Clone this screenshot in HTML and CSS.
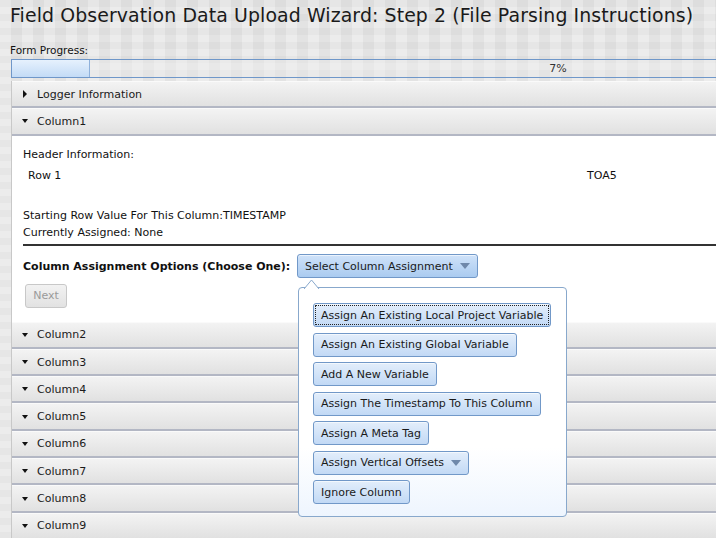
FILE: index.html
```html
<!DOCTYPE html>
<html>
<head>
<meta charset="utf-8">
<link rel="stylesheet" href="styles.css">
</head>
<body>
<div class="page">
  <h1 class="title">Field Observation Data Upload Wizard: Step 2 (File Parsing Instructions)</h1>
  <div class="progress-label">Form Progress:</div>
  <div class="progress">
    <div class="progress-fill" style="width: 78px"></div>
    <div class="progress-text">7%</div>
  </div>
  <div class="accordion">
    <div class="acc-header"><span class="tri tri-right"></span>Logger Information</div>
    <div class="acc-header"><span class="tri tri-down"></span>Column1</div>
    <div class="acc-content">
      <div class="line">Header Information:</div>
      <div class="row-table">
        <span class="cell-a">Row 1</span>
        <span class="cell-b">TOA5</span>
      </div>
      <div class="line start">Starting Row Value For This Column:TIMESTAMP</div>
      <div class="line">Currently Assigned: None</div>
      <div class="rule"></div>
      <div class="assign-row">
        <span class="assign-label">Column Assignment Options (Choose One):</span>
        <div class="select-wrap">
          <button class="btn btn-select">Select Column Assignment <span class="caret"></span></button>
          <div class="popup">
            <svg class="popup-arrow" width="18" height="10" viewBox="0 0 18 10"><path d="M0 10 L7.5 1 L15 10" fill="#fff" stroke="#88a8cc" stroke-width="1"/></svg>
            <button class="btn btn-opt focused">Assign An Existing Local Project Variable</button>
            <button class="btn btn-opt">Assign An Existing Global Variable</button>
            <button class="btn btn-opt">Add A New Variable</button>
            <button class="btn btn-opt">Assign The Timestamp To This Column</button>
            <button class="btn btn-opt">Assign A Meta Tag</button>
            <button class="btn btn-opt">Assign Vertical Offsets <span class="caret"></span></button>
            <button class="btn btn-opt">Ignore Column</button>
          </div>
        </div>
      </div>
      <button class="btn-next" disabled>Next</button>
    </div>
    <div class="acc-header"><span class="tri tri-down"></span>Column2</div>
    <div class="acc-header"><span class="tri tri-down"></span>Column3</div>
    <div class="acc-header"><span class="tri tri-down"></span>Column4</div>
    <div class="acc-header"><span class="tri tri-down"></span>Column5</div>
    <div class="acc-header"><span class="tri tri-down"></span>Column6</div>
    <div class="acc-header"><span class="tri tri-down"></span>Column7</div>
    <div class="acc-header"><span class="tri tri-down"></span>Column8</div>
    <div class="acc-header"><span class="tri tri-down"></span>Column9</div>
  </div>
</div>
</body>
</html>
```
FILE: styles.css
```css
html, body {
  margin: 0;
  padding: 0;
  overflow: hidden;
}
body {
  width: 716px;
  height: 538px;
  background-color: #e5e5e5;
  background-image:
    linear-gradient(90deg, rgba(255,255,255,0.18) 50%, rgba(0,0,0,0.02) 50%),
    linear-gradient(0deg, rgba(255,255,255,0.12) 50%, rgba(0,0,0,0.02) 50%);
  background-size: 22px 22px, 14px 14px;
  font-family: "DejaVu Sans", Verdana, sans-serif;
  font-size: 11px;
  color: #111;
}
.page {
  padding-left: 10px;
  width: 1100px;
}
.title {
  margin: 0;
  padding-top: 3px;
  height: 38px;
  font-size: 18.9px;
  font-weight: normal;
  line-height: 24px;
  color: #1a1a1a;
  letter-spacing: 0.1px;
}
.progress-label {
  height: 18px;
  line-height: 19px;
  font-size: 10.5px;
}
.progress {
  position: relative;
  margin-left: 1px;
  width: 1092px;
  height: 17px;
  border: 1px solid #6f97c9;
  background: rgba(240,240,240,0.4);
}
.progress-fill {
  height: 17px;
  background: linear-gradient(#e6f1fd, #c3dbf6);
  border-right: 1px solid #8fb1db;
  box-sizing: border-box;
}
.progress-text {
  position: absolute;
  left: 0;
  right: 0;
  top: 0;
  text-align: center;
  line-height: 17px;
  font-size: 11px;
  color: #333;
}
.accordion {
  margin-left: 1px;
  margin-top: 3px;
  border-left: 1px solid #c8c8c8;
}
.acc-header {
  display: flex;
  align-items: center;
  height: 24.3px;
  border-top: 1px solid #fafafa;
  border-bottom: 2px solid #b3b7c4;
  background: linear-gradient(#f3f3f3, #e1e1e1);
  padding-left: 10px;
  font-size: 11px;
  color: #1a1a1a;
}
.tri {
  display: inline-block;
  width: 0;
  height: 0;
  margin-right: 9px;
}
.tri-right {
  border-top: 4px solid transparent;
  border-bottom: 4px solid transparent;
  border-left: 4px solid #111;
  margin-left: 1px;
  margin-right: 10px;
}
.tri-down {
  border-left: 3.5px solid transparent;
  border-right: 3.5px solid transparent;
  border-top: 4px solid #111;
}
.acc-content {
  background: #fff;
  padding: 10px 0 10px 11px;
  height: 166px;
}
.line {
  line-height: 17px;
  font-size: 11px;
}
.row-table {
  display: grid;
  grid-template-columns: 559px auto;
  padding-left: 5px;
  margin-top: 4px;
  line-height: 17px;
  height: 40px;
}
.rule {
  height: 2px;
  background: #333;
  margin-top: 3px;
}
.assign-row {
  display: flex;
  align-items: center;
  margin-top: 9px;
  height: 23px;
}
.assign-label {
  font-weight: bold;
  font-size: 11px;
  width: 274px;
}
.select-wrap {
  position: relative;
}
.btn {
  font-family: "DejaVu Sans", Verdana, sans-serif;
  font-size: 11px;
  color: #1a1a1a;
  border: 1px solid #7198c8;
  border-radius: 3px;
  background: linear-gradient(#e3eefb, #c2d9f5);
  padding: 0 7px;
  height: 24px;
  display: flex;
  align-items: center;
  white-space: nowrap;
  box-shadow: inset 0 1px 0 rgba(255,255,255,0.6);
}
.btn-select {
  background: linear-gradient(#cfe2f9, #aacbf0);
}
.caret {
  display: inline-block;
  width: 0;
  height: 0;
  margin-left: 7px;
  border-left: 5px solid transparent;
  border-right: 5px solid transparent;
  border-top: 6px solid #6f88aa;
}
.popup {
  position: absolute;
  left: 1px;
  top: 33px;
  width: 253px;
  height: 213px;
  padding: 15px 0 0 14px;
  border: 1px solid #88a8cc;
  border-radius: 4px;
  background: linear-gradient(#fff 70%, #eef5fe);
  display: flex;
  flex-direction: column;
  align-items: flex-start;
  gap: 5.5px;
}
.popup-arrow {
  position: absolute;
  left: 5px;
  top: -9px;
}
.btn-opt.focused {
  outline: 1px dotted #222;
  outline-offset: -3px;
}
.btn-next {
  margin-top: 6px;
  margin-left: 2px;
  font-family: "DejaVu Sans", Verdana, sans-serif;
  font-size: 11px;
  color: #9a9a9a;
  height: 24px;
  width: 42px;
  padding: 0;
  border: 1px solid #c8c8c8;
  border-radius: 3px;
  background: linear-gradient(#f2f2f2, #e2e2e2);
}
```
